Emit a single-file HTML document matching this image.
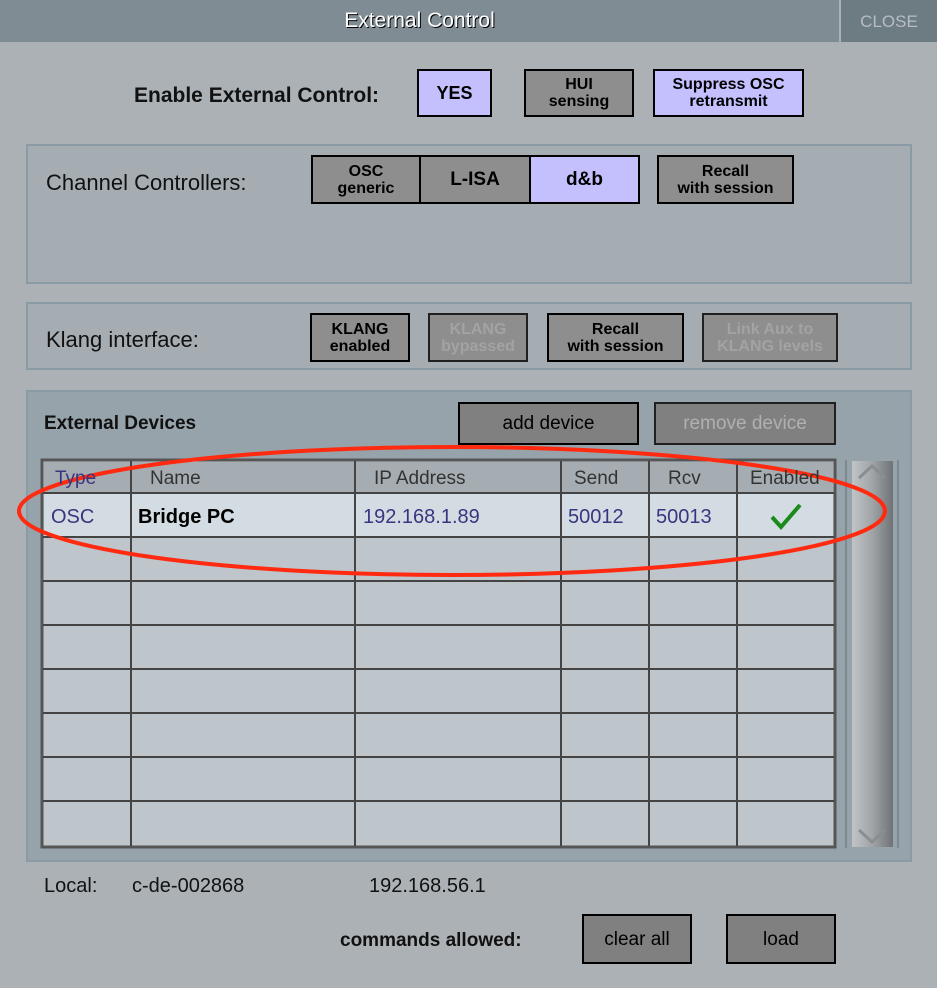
<!DOCTYPE html>
<html><head><style>
*{margin:0;padding:0;box-sizing:border-box}
body{width:937px;height:988px;background:#abb1b5;font-family:"Liberation Sans",sans-serif;position:relative;overflow:hidden}
.a{position:absolute}
.btn{position:absolute;border:2px solid #000;background:#8e8e8e;color:#000;font-weight:bold;font-size:16px;line-height:17px;text-align:center;display:flex;align-items:center;justify-content:center}
.on{background:#c4c0fe}
.dis{color:#a3a3a3;border-color:#202020}
.nb{font-weight:normal;font-size:19px}
.panel{position:absolute;border:2px solid #8b9ba5;background:#a5adb2}
.lbl{position:absolute;font-size:22px;color:#111}
.cell{position:absolute;font-size:20px;color:#3a3580}
</style></head><body>
<div class="a" style="left:0;top:0;width:839px;height:42px;background:#7f8c94"></div>
<div class="a" style="left:0;top:0;width:839px;height:42px;line-height:42px;text-align:center;color:#fff;font-size:21px;text-shadow:1px 1px 0 #000">External Control</div>
<div class="a" style="left:841px;top:0;width:96px;height:42px;background:#6d7b83;color:#b6bec3;font-size:17px;line-height:44px;text-align:center">CLOSE</div>

<div class="a" style="left:134px;top:84px;font-size:21px;font-weight:bold;color:#111">Enable External Control:</div>
<div class="btn on" style="left:417px;top:69px;width:75px;height:48px;font-size:18px">YES</div>
<div class="btn" style="left:524px;top:69px;width:110px;height:48px">HUI<br>sensing</div>
<div class="btn on" style="left:653px;top:69px;width:151px;height:48px">Suppress OSC<br>retransmit</div>

<div class="panel" style="left:26px;top:144px;width:886px;height:140px"></div>
<div class="lbl" style="left:46px;top:170px">Channel Controllers:</div>
<div class="btn" style="left:311px;top:155px;width:110px;height:49px">OSC<br>generic</div>
<div class="btn" style="left:419px;top:155px;width:112px;height:49px;font-size:19px">L-ISA</div>
<div class="btn on" style="left:529px;top:155px;width:111px;height:49px;font-size:19px">d&amp;b</div>
<div class="btn" style="left:657px;top:155px;width:137px;height:49px">Recall<br>with session</div>

<div class="panel" style="left:26px;top:302px;width:886px;height:68px"></div>
<div class="lbl" style="left:46px;top:327px">Klang interface:</div>
<div class="btn" style="left:310px;top:313px;width:100px;height:49px">KLANG<br>enabled</div>
<div class="btn dis" style="left:428px;top:313px;width:100px;height:49px">KLANG<br>bypassed</div>
<div class="btn" style="left:547px;top:313px;width:137px;height:49px">Recall<br>with session</div>
<div class="btn dis" style="left:702px;top:313px;width:136px;height:49px">Link Aux to<br>KLANG levels</div>

<div class="panel" style="left:26px;top:390px;width:886px;height:472px;background:#96a3aa"></div>
<div class="a" style="left:44px;top:413px;font-size:19px;font-weight:bold;color:#111">External Devices</div>
<div class="btn nb" style="left:458px;top:402px;width:181px;height:43px;background:#808080">add device</div>
<div class="btn nb dis" style="left:654px;top:402px;width:182px;height:43px;background:#808080;color:#b0b0b0">remove device</div>

<svg class="a" style="left:0;top:0" width="937" height="988">
<rect x="42" y="460" width="793" height="387" fill="#bec5cb" stroke="#555" stroke-width="3"/>
<rect x="44" y="462" width="789" height="31" fill="#a5adb2"/>
<rect x="44" y="494" width="789" height="42" fill="#d3dce2"/>
<g stroke="#444" stroke-width="2">
<line x1="43" y1="493" x2="834" y2="493"/>
<line x1="43" y1="537" x2="834" y2="537"/><line x1="43" y1="581" x2="834" y2="581"/>
<line x1="43" y1="625" x2="834" y2="625"/><line x1="43" y1="669" x2="834" y2="669"/>
<line x1="43" y1="713" x2="834" y2="713"/><line x1="43" y1="757" x2="834" y2="757"/>
<line x1="43" y1="801" x2="834" y2="801"/>
<line x1="131" y1="461" x2="131" y2="846"/><line x1="355" y1="461" x2="355" y2="846"/>
<line x1="561" y1="461" x2="561" y2="846"/><line x1="649" y1="461" x2="649" y2="846"/>
<line x1="737" y1="461" x2="737" y2="846"/>
</g>
<line x1="846" y1="460" x2="846" y2="848" stroke="#7d8990" stroke-width="2"/>
<line x1="898" y1="460" x2="898" y2="848" stroke="#7d8990" stroke-width="2"/>
<defs><linearGradient id="g" x1="0" x2="1"><stop offset="0" stop-color="#c0c4c6"/><stop offset="0.5" stop-color="#a0a4a6"/><stop offset="1" stop-color="#6e7376"/></linearGradient></defs>
<rect x="852" y="461" width="41" height="386" fill="url(#g)"/>
<path d="M859 478 L872 466 L885 478" fill="none" stroke="#8a8e90" stroke-width="3"/>
<path d="M859 830 L872 842 L885 830" fill="none" stroke="#8a8e90" stroke-width="3"/>
<path d="M772 517 L781 527 L800 505" fill="none" stroke="#1a8a1a" stroke-width="4"/>
<ellipse cx="452" cy="511" rx="433" ry="64" fill="none" stroke="#ff2a10" stroke-width="4"/>
</svg>
<div class="cell" style="left:55px;top:468px;font-size:19px;color:#3a3580">Type</div>
<div class="cell" style="left:150px;top:468px;font-size:19px;color:#333">Name</div>
<div class="cell" style="left:374px;top:468px;font-size:19px;color:#333">IP Address</div>
<div class="cell" style="left:574px;top:468px;font-size:19px;color:#333">Send</div>
<div class="cell" style="left:668px;top:468px;font-size:19px;color:#333">Rcv</div>
<div class="cell" style="left:750px;top:468px;font-size:19px;color:#333">Enabled</div>
<div class="cell" style="left:51px;top:506px">OSC</div>
<div class="cell" style="left:138px;top:506px;color:#000;font-weight:bold">Bridge PC</div>
<div class="cell" style="left:363px;top:506px">192.168.1.89</div>
<div class="cell" style="left:568px;top:506px">50012</div>
<div class="cell" style="left:656px;top:506px">50013</div>

<div class="lbl" style="left:44px;top:875px;font-size:20px">Local:</div>
<div class="lbl" style="left:132px;top:875px;font-size:20px">c-de-002868</div>
<div class="lbl" style="left:369px;top:875px;font-size:20px">192.168.56.1</div>
<div class="a" style="left:340px;top:930px;font-size:19px;font-weight:bold;color:#111">commands allowed:</div>
<div class="btn nb" style="left:582px;top:914px;width:110px;height:50px;background:#808080">clear all</div>
<div class="btn nb" style="left:726px;top:914px;width:110px;height:50px;background:#808080">load</div>
</body></html>
